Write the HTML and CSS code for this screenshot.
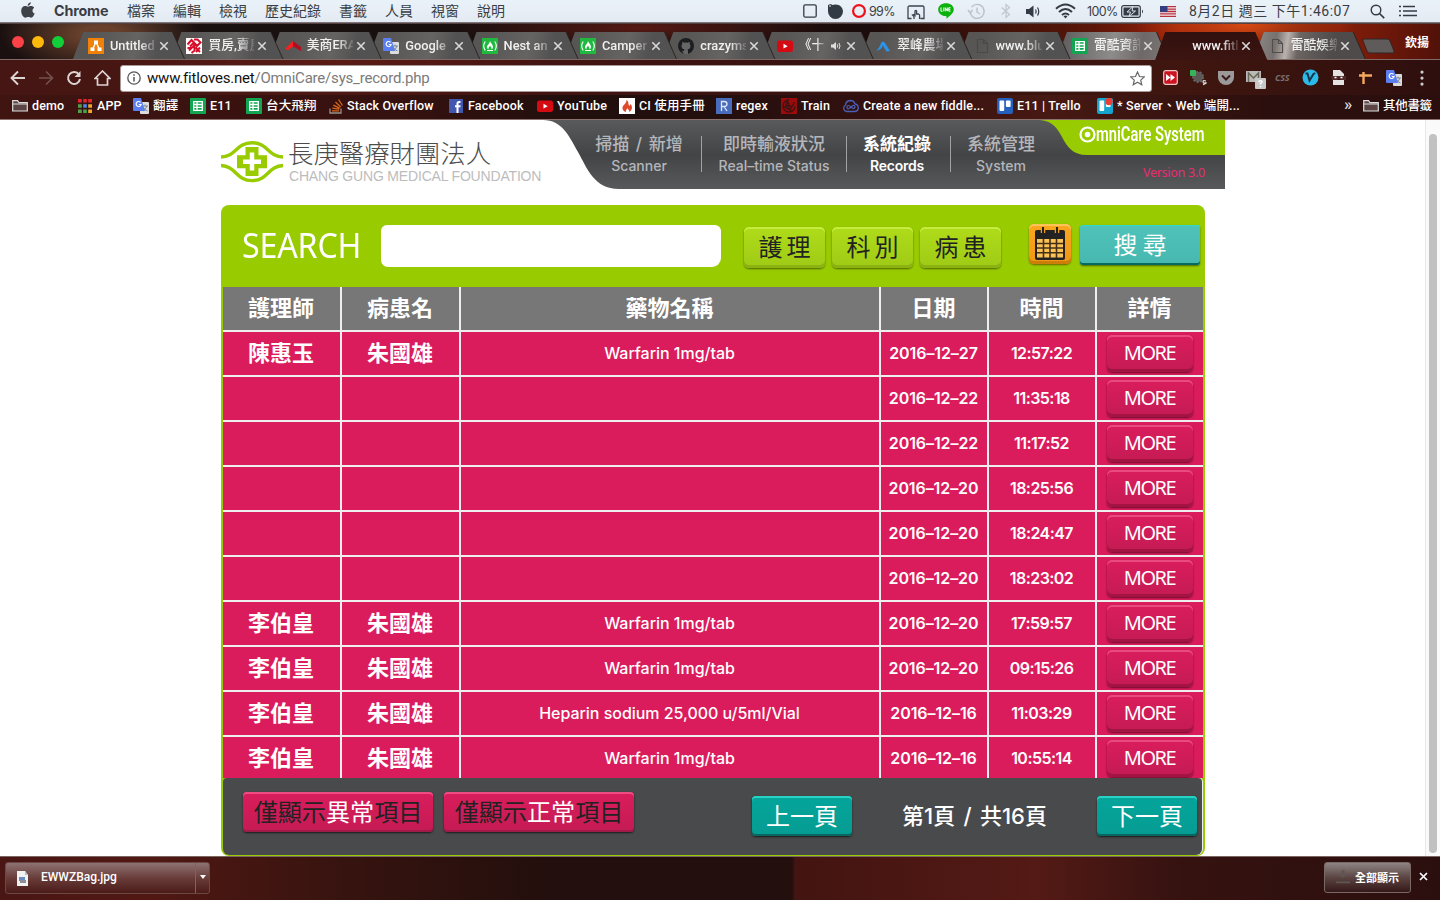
FILE: index.html
```html
<!DOCTYPE html>
<html lang="zh-Hant">
<head>
<meta charset="utf-8">
<title>OmniCare System</title>
<link rel="stylesheet" href="styles.css">
</head>
<body>
<svg class="defs" width="0" height="0">
  <symbol id="close" viewBox="0 0 10 10"><path d="M1.300 1.300l7.400 7.400M8.700 1.300L1.300 8.700" stroke="#d8d8d8" stroke-width="1.600"/></symbol>
  <symbol id="translate" viewBox="0 0 16 16"><rect x="7" y="4" width="9" height="12" rx="1" fill="#ddd"/><path d="M9 8h6M12 6.500v1.500M14 8q-1 3-4 5M10.500 9.500q1 2.500 4 3.500" stroke="#789" fill="none"/><path d="M1 0h7l4 13H1a1 1 0 0 1-1-1V1a1 1 0 0 1 1-1z" fill="#5b7ff0"/><path d="M7.500 4.300a2.500 2.500 0 1 0 .6 2.200H5.800" stroke="#fff" stroke-width="1.200" fill="none"/></symbol>
  <symbol id="sheet" viewBox="0 0 16 16"><rect width="16" height="16" rx="1" fill="#12a552"/><path d="M3.700 3.700h8.600v8.600H3.700zM3.700 6.500h8.600M3.700 9.400h8.600M7 3.700v8.600" stroke="#fff" stroke-width="1.300" fill="none"/></symbol>
  <symbol id="camp" viewBox="0 0 16 16"><rect width="16" height="16" fill="#21b83f"/><path d="M3.200 3.500q-3 4.500 0 9M12.800 3.500q3 4.500 0 9M5 12.500h6" stroke="#fff" stroke-width="1.100" fill="none"/><path d="M8 3c.5 2 3 3.500 3 6a3 3 0 0 1-1.500 2.500C10 9.500 8.500 9 8 7.500 7.500 9 6 9.500 6.500 11.500A3 3 0 0 1 5 9c0-2 2.500-3 3-6z" fill="#fff"/></symbol>
  <symbol id="youtube" viewBox="0 0 16 16"><rect y="2.500" width="16" height="11.500" rx="2.500" fill="#d50b13"/><path d="M6.500 5.800l4.200 2.400-4.200 2.400z" fill="#fff"/></symbol>
  <symbol id="doc" viewBox="0 0 16 16"><path d="M3.500 1.500h6l4 4v9h-10zM9.500 1.500v4h4" fill="none" stroke="currentColor" stroke-width="1.100"/></symbol>
  <symbol id="folder" viewBox="0 0 16 14"><path d="M.7 12V1.700h4.800l1.500 2h8.300V12z" fill="#5b4444" stroke="#ddd" stroke-width="1.200"/><path d="M.7 5h14.600" stroke="#ddd" stroke-width="1"/></symbol>
  <symbol id="trello" viewBox="0 0 16 16"><rect width="16" height="16" rx="2" fill="currentColor"/><rect x="2.500" y="2.500" width="4.700" height="10.500" rx="1" fill="#fff"/><rect x="8.900" y="2.500" width="4.700" height="6.500" rx="1" fill="#fff"/></symbol>
</svg>

<div class="menubar">
  <svg class="apple" width="14" height="17" viewBox="0 0 14 17"><path d="M9.800.2c.2 1.700-1.400 3.600-3.100 3.500C6.500 2.100 8.100.4 9.800.2zM7 4.700C7.800 4.700 8.700 4 10 4c1.300 0 2.500.7 3.200 1.700-2.500 1.500-2.100 4.900.5 5.900-.6 1.700-2 4.200-3.500 4.200-1.100 0-1.600-.7-2.900-.7s-1.800.7-2.900.7C2.200 15.800.2 12.100.2 9.100.2 5.900 2.200 4.100 4.100 4.100 5.400 4.100 6.300 4.700 7 4.700z" fill="#3f4247"/></svg>
  <b>Chrome</b><span>檔案</span><span>編輯</span><span>檢視</span><span>歷史紀錄</span><span>書籤</span><span>人員</span><span>視窗</span><span>說明</span>
  <svg width="14" height="14" viewBox="0 0 14 14"><rect x=".8" y=".8" width="12.400" height="12.400" rx="1.500" fill="none" stroke="#333b45" stroke-width="1.300"/></svg>
  <svg width="15" height="15" viewBox="0 0 15 15"><path d="M0 1l3-1 1 1c7-2 11 2 11 6.500A7.500 7.500 0 0 1 0 7.500z" fill="#333b45"/><circle cx="2" cy="2" r=".8" fill="#fff"/></svg>
  <svg width="14" height="14" viewBox="0 0 14 14"><circle cx="7" cy="7" r="5.900" fill="none" stroke="#f0101a" stroke-width="2.200"/></svg>
  <span class="pct">99%</span>
  <svg class="down2" width="18" height="15" viewBox="0 0 18 15"><path d="M4.500 13.500H1V2.500Q1 1 2.500 1h13Q17 1 17 2.500v11h-3.500M7 14v-2.500l-1.500-1.500 1.500-.5 1 1V6q.8-1 1.600 0v3h2q1 .3 1 1.500V14" fill="none" stroke="#3a4450" stroke-width="1.300"/></svg>
  <svg width="16" height="16" viewBox="0 0 16 16"><path d="M8 .3c4.500 0 7.800 2.700 7.800 6.300 0 3.200-3.300 6-7.300 9.100v-2.400C3.500 13.300.2 10.500.2 6.600.2 3 3.500.3 8 .3z" fill="#0cb10c"/><path d="M3 4.500v3.800h1.500M5.800 4.500v3.800M7.300 8.300V4.700l2 3.400V4.500M12.500 4.700h-1.700v3.500h1.700M10.800 6.400h1.500" stroke="#fff" fill="none"/></svg>
  <svg width="19" height="17" viewBox="0 0 19 17"><path d="M3.200 9a7 7 0 1 0 1.500-5M1 7l2.200 3L5.500 7M10 4.500V9l3 2" fill="none" stroke="#b9c1c9" stroke-width="1.400"/></svg>
  <svg width="10" height="16" viewBox="0 0 10 16"><path d="M.8 4.500l7.700 7L5 14.500V1.500l3.500 3-7.700 7" fill="none" stroke="#c0c7ce" stroke-width="1.200"/></svg>
  <svg width="14" height="13" viewBox="0 0 14 13"><path d="M0 4h3l4.500-3.500v12L3 9H0z" fill="#343b44"/><path d="M9.500 4.500q1.200 2 0 4M11.500 2.500q2.500 4 0 8" fill="none" stroke="#343b44" stroke-width="1.200"/></svg>
  <svg width="21" height="16" viewBox="0 0 21 16"><path d="M1 5.800q9.500-8.500 19 0M4 9q6.500-6 13 0M7 12q3.500-3 7 0" fill="none" stroke="#343b44" stroke-width="2"/><path d="M8.500 13.300q2-1.500 4 0l-2 2.200z" fill="#343b44"/></svg>
  <span class="pct">100%</span>
  <svg width="23" height="13" viewBox="0 0 23 13"><rect x=".7" y=".7" width="18.600" height="11.600" rx="2" fill="none" stroke="#343b44" stroke-width="1.200"/><rect x="2.500" y="2.500" width="15" height="8" fill="#343b44"/><path d="M12 1.500L6 7h3.500L8 11.500 14.500 6H11z" fill="#343b44" stroke="#eaf1f8" stroke-width=".9"/><path d="M21 4.500q2 2 0 4z" fill="#343b44"/></svg>
  <svg width="16" height="11" viewBox="0 0 16 11"><rect width="16" height="11" fill="#f3eaec"/><path d="M0 .7h16M0 3.100h16M0 5.500h16M0 7.900h16M0 10.300h16" stroke="#b6303e" stroke-width="1.300"/><rect width="7.500" height="6" fill="#343d80"/></svg>
  <span class="clock">8月2日 週三 下午1:46:07</span>
  <svg width="15" height="15" viewBox="0 0 15 15"><circle cx="6" cy="6" r="4.800" fill="none" stroke="#343b44" stroke-width="1.400"/><path d="M9.500 9.500l4.700 4.700" stroke="#343b44" stroke-width="1.700"/></svg>
  <svg width="18" height="12" viewBox="0 0 18 12"><path d="M4 1.500h12M4 6h14M4 10.500h14" stroke="#343b44" stroke-width="1.600"/><path d="M0 1.500h2M0 6h2M0 10.500h2" stroke="#343b44" stroke-width="1.600"/></svg>
</div>

<div class="tabstrip">
  <div class="lights"><i class="red"></i><i class="amber"></i><i class="green"></i></div>
  <div class="tabs">
    <div class="tab t1"><svg class="fav" viewBox="0 0 16 16"><rect width="16" height="16" fill="#f08209"/><path d="M8 4L4.500 11.500M8 4l3.500 7.500" stroke="#fff" stroke-width="1.400"/><path d="M6 2.500h4v3.500H6zM2.500 9.500h4V13h-4zM9.500 9.500h4V13h-4z" fill="#fff"/></svg><span>Untitled</span><svg class="x"><use href="#close"/></svg></div>
    <div class="tab t2"><svg class="fav" viewBox="0 0 16 16"><rect width="16" height="16" fill="#fff"/><g fill="none" stroke="#d80f2c" stroke-width="2"><path d="M1.500 6.500l4-4.500 2.500 2.500-4 4M8 1.500h3.500l3 3-3.500 3.500-3-3.500M1.500 10h4l3-2.500v5l-3 2.500M3 12.500l2.500-2.500M9.500 9.500l4.500 4.500M10 14l4-4.500"/></g></svg><span class="cjk">買房,賣房</span><svg class="x"><use href="#close"/></svg></div>
    <div class="tab t3"><svg class="fav" viewBox="0 0 16 16"><path d="M0 11L8 3v5.500L3 12z" fill="#ff1d1d"/><path d="M8 3l8 6v4L8 8.500z" fill="#b00f20"/></svg><span class="cjk">美商ERA</span><svg class="x"><use href="#close"/></svg></div>
    <div class="tab t4"><svg class="fav"><use href="#translate"/></svg><span>Google</span><svg class="x"><use href="#close"/></svg></div>
    <div class="tab t5"><svg class="fav"><use href="#camp"/></svg><span>Nest an</span><svg class="x"><use href="#close"/></svg></div>
    <div class="tab t6"><svg class="fav"><use href="#camp"/></svg><span>Camper</span><svg class="x"><use href="#close"/></svg></div>
    <div class="tab t7"><svg class="fav" viewBox="0 0 16 16"><circle cx="8" cy="8" r="8" fill="#1b1d20"/><path d="M6 16v-3q-2 .5-3-1.500M10 16v-3q0-1-.5-1.500 3-.5 3-3.500 0-1.200-.8-2 .3-1-.1-2-1 0-2 .8Q8 4.400 6.400 4.800 5.400 4 4.400 4q-.4 1-.1 2-.8.800-.8 2 0 3 3 3.500Q6 12 6 13v3z" fill="#666"/></svg><span>crazyms</span><svg class="x"><use href="#close"/></svg></div>
    <div class="tab t8"><svg class="fav"><use href="#youtube"/></svg><span class="cjk short">《十萬</span><svg class="snd" viewBox="0 0 10 10"><path d="M0 3.500h2L5 1v8L2 6.500H0z" fill="#ddd"/><path d="M6.300 3.300q1 1.700 0 3.400M8 2q2 3 0 6" stroke="#ddd" fill="none"/></svg><svg class="x"><use href="#close"/></svg></div>
    <div class="tab t9"><svg class="fav" viewBox="0 0 16 16"><path d="M1 13q3-2 5-8 2-3 4 0l5 8-3.500.5Q9 10 8 7.500 6 12 1 13z" fill="#2b93e8"/></svg><span class="cjk">翠峰農場</span><svg class="x"><use href="#close"/></svg></div>
    <div class="tab t10"><svg class="fav faint"><use href="#doc"/></svg><span>www.blu</span><svg class="x"><use href="#close"/></svg></div>
    <div class="tab t11"><svg class="fav"><use href="#sheet"/></svg><span class="cjk">雷酷資訊</span><svg class="x"><use href="#close"/></svg></div>
    <div class="tab t12 active"><i class="fav"></i><span>www.fitl</span><svg class="x"><use href="#close"/></svg></div>
    <div class="tab t13"><svg class="fav grey"><use href="#doc"/></svg><span class="cjk">雷酷娛樂</span><svg class="x"><use href="#close"/></svg></div>
  </div>
  <svg class="newtab" width="34" height="16" viewBox="0 0 34 16"><path d="M1 1h24q2 0 3 2l4 10q.5 2-1 2H8q-2 0-3-2L1 3z" fill="#5f5b5a" stroke="#332524"/></svg>
  <b class="profile">欽揚</b>
</div>

<div class="toolbar">
  <svg width="16" height="16" viewBox="0 0 16 16"><path d="M15 8H2M8 1.500L1.500 8 8 14.500" fill="none" stroke="#ddd4d3" stroke-width="1.900"/></svg>
  <svg width="16" height="16" viewBox="0 0 16 16"><path d="M1 8h13M8 1.500L14.500 8 8 14.500" fill="none" stroke="#735150" stroke-width="1.700"/></svg>
  <svg width="16" height="16" viewBox="0 0 16 16"><path d="M13 4.500A6 6 0 1 0 14 9" fill="none" stroke="#ddd4d3" stroke-width="2"/><path d="M14.500 1v6h-6z" fill="#ddd4d3"/></svg>
  <svg width="17" height="16" viewBox="0 0 17 16"><path d="M1 8.500L8.500 1 16 8.500h-2.500V15h-10V8.500z" fill="none" stroke="#ddd4d3" stroke-width="1.700"/></svg>
  <div class="omnibox">
    <svg width="14" height="14" viewBox="0 0 14 14"><circle cx="7" cy="7" r="6.200" fill="none" stroke="#555" stroke-width="1.300"/><path d="M7 6v4.500M7 3.300v1.500" stroke="#555" stroke-width="1.500"/></svg>
    <p class="url"><span>www.fitloves.net</span>/OmniCare/sys_record.php</p>
    <svg width="15" height="15" viewBox="0 0 15 15"><path d="M7.500 1l2 4.500 4.800.4-3.600 3.200 1.100 4.700-4.300-2.500-4.300 2.500 1.100-4.700L.7 5.900l4.800-.4z" fill="none" stroke="#666" stroke-width="1.200"/></svg>
  </div>
  <svg width="15" height="15" viewBox="0 0 15 15"><rect x=".7" y=".7" width="13.600" height="13.600" rx="2" fill="#cd1220" stroke="#efc6c8" stroke-width="1.200"/><path d="M3 4l4.500 3.500L3 11zM7.500 4L12 7.500 7.500 11z" fill="#fff"/></svg>
  <svg width="17" height="16" viewBox="0 0 17 16"><circle cx="8" cy="7" r="5" fill="#5d5756" stroke="#666" stroke-width="2" stroke-dasharray="2 1.500"/><rect width="6" height="6" rx="1" fill="#35b55b"/><path d="M16 11q-3-1-3 .7t2.500 1.200-2.500 1.800" fill="none" stroke="#ddd" stroke-width="1.200"/></svg>
  <svg width="16" height="15" viewBox="0 0 16 15"><path d="M0 1h16v6.500a8 7.500 0 0 1-16 0z" fill="#9b9999"/><path d="M4 5.500L8 9.500l4-4" stroke="#3a1b1b" stroke-width="2" fill="none"/></svg>
  <svg class="mail" width="20" height="20" viewBox="0 0 20 20"><path d="M0 2h15v11H0z" fill="#bbb9b8"/><path d="M2.500 13V4l5 5 5-5v9" stroke="#665" stroke-width="1.500" fill="none"/><rect x="9" y="9" width="11" height="11" rx="1" fill="#c7c7c7"/><path d="M12.500 13q2-2.500 3.500-.5 0 1.300-1.500 2v1M14.500 17v1.200" stroke="#fff" stroke-width="1.400" fill="none"/></svg>
  <span class="css">CSS</span>
  <svg width="17" height="17" viewBox="0 0 17 17"><circle cx="8.500" cy="8.500" r="8" fill="#2bbbea"/><path d="M3.500 4.500h2l2 7 4-6.500 1.800-1" stroke="#17354b" stroke-width="2" fill="none"/></svg>
  <svg width="15" height="15" viewBox="0 0 15 15"><path d="M2 0h7l4 4v3H2zM2 10h11v5H2z" fill="#e5e2e2"/><path d="M0 6h15v4h-5L8 8.500 6 10H1z" fill="#522929"/><path d="M3.500 7.500h2M9.500 7.500h2" stroke="#fff" stroke-width="1.500"/></svg>
  <svg width="14" height="14" viewBox="0 0 14 14"><path d="M0 4.500h13M4.500 1v12" stroke="#f4a95c" stroke-width="2.400"/></svg>
  <svg width="16" height="16"><use href="#translate"/></svg>
  <svg width="4" height="16" viewBox="0 0 4 16"><path d="M2 2v.1M2 8v.1M2 14v.1" stroke="#ccc" stroke-width="3.200" stroke-linecap="round"/></svg>
</div>

<div class="bookmarks">
  <a><svg class="fold"><use href="#folder"/></svg>demo</a>
  <a><svg class="bi apps" viewBox="0 0 14 14"><path d="M0 0h14v3.500H0z" fill="#e3262d"/><path d="M0 5.200h4v3.500H0zM0 10.400h4v3.500H0zM5 10.400h4v3.500H5z" fill="#4fa04a"/><path d="M5 5.200h4v3.500H5z" fill="#4b86ea"/><path d="M10 5.200h4v3.500h-4zM10 10.400h4v3.500h-4z" fill="#eea72b"/><path d="M4.500 0v14M9.500 0v14" stroke="#2c1110" stroke-width="1.400"/></svg>APP</a>
  <a><svg class="bi"><use href="#translate"/></svg>翻譯</a>
  <a><svg class="bi"><use href="#sheet"/></svg>E11</a>
  <a><svg class="bi"><use href="#sheet"/></svg>台大飛翔</a>
  <a class="so"><svg class="bi" viewBox="0 0 16 16"><path d="M1 10.500V15h11v-4.500" fill="none" stroke="#99908c" stroke-width="1.300"/><path d="M3 12.800h7M3.300 10.200l7 1M4.300 7.200l6.300 3M6.500 4l5.200 5M9.500 1.500l4 6" stroke="#d9661a" stroke-width="1.300"/></svg>Stack Overflow</a>
  <a class="fb"><svg class="bi" viewBox="0 0 14 14"><rect width="14" height="14" fill="#4356ad"/><path d="M8.500 14V4.500Q8.500 3 10 3h1.500M6 7.300h5.500" stroke="#fff" stroke-width="2" fill="none"/></svg>Facebook</a>
  <a><svg class="bi"><use href="#youtube"/></svg>YouTube</a>
  <a><svg class="bi" viewBox="0 0 16 16"><rect width="16" height="16" fill="#fff"/><path d="M7.500 2c3 2 1 4 3 6l1-2c2 2 2.500 6-1.500 8 1-2-1-2-1.500-4-1 2-2 2-1.500 4-4-1-4.500-5-2-7 .5-1 2.500-2 2.500-5z" fill="#e0482a"/></svg>CI 使用手冊</a>
  <a><svg class="bi" viewBox="0 0 16 16"><rect width="16" height="16" fill="#496bbb"/><path d="M5.500 13V3.500H8q3 0 3 2.500T8 8.500H5.500M8 8.500l3 4.500" fill="none" stroke="#dfe7ff" stroke-width="1.300"/></svg>regex</a>
  <a><svg class="bi" viewBox="0 0 16 16"><rect width="16" height="16" fill="#9b0b0b"/><path d="M8 2a6 6 0 1 0 6 6M8 5a3 3 0 1 0 3 3M3 4q5-2 5 4M13 4q0 5-5 4M12 13q-5 0-4-5M2.500 10q3-3 5.500-2" stroke="#3d1212" stroke-width="1.300" fill="none"/></svg>Train</a>
  <a><svg class="bi" viewBox="0 0 16 16"><path d="M4 13.500Q.7 13 .7 10q0-2 2-3 0-4 4.500-4.500Q11 2.500 12 6q3.300.5 3.300 4 0 3-3.300 3.500z" fill="none" stroke="#4960b8" stroke-width="1.300"/><path d="M8 9q-3-3-4 0 0 2.500 2 1.500l4-3q2-.5 2 1.500-1 3-4 0z" fill="none" stroke="#4960b8" stroke-width="1.200"/></svg>Create a new fiddle...</a>
  <a class="blue"><svg class="bi"><use href="#trello"/></svg><span>E11 | Trello</span></a>
  <a class="cyan"><svg class="bi" viewBox="0 0 16 16"><use href="#trello"/><circle cx="12" cy="3.500" r="3.700" fill="#ed3f35"/></svg><span>* Server、Web 端開...</span></a>
  <a class="more">»</a>
  <a><svg class="fold"><use href="#folder"/></svg>其他書籤</a>
</div>

<div class="viewport">
  <div class="site">
    <header class="header">
      <div class="brand">
        <svg width="63" height="44" viewBox="0 0 63 44"><g fill="none" stroke="#99cc00" stroke-width="3.400"><path d="M0 17C15 17 15 2.700 31 2.700S47 17 62 17"/><path d="M0 25.500C15 26 15 40.600 31 40.600S47 26 62 25.500"/></g><path d="M24.500 7h13v8.200H46v13h-8.500V36h-13v-7.800H16v-13h8.500z" fill="#99cc00"/><path d="M31 12.500v18M22 21.700h18" stroke="#fff" stroke-width="4.500"/></svg>
        <div><p class="zh">長庚醫療財團法人</p><p class="en">CHANG GUNG MEDICAL FOUNDATION</p></div>
      </div>
      <div class="navwrap">
        <svg class="navbg" width="682" height="69" viewBox="0 0 682 69"><defs><linearGradient id="ng" x1="0" y1="0" x2="0" y2="1"><stop offset="0" stop-color="#595a5c"/><stop offset=".5" stop-color="#434446"/><stop offset="1" stop-color="#58595b"/></linearGradient></defs><path d="M0 0C19 0 26 16 35 32S51 69 76 69H682V0z" fill="url(#ng)"/><path d="M497 0C524 2 515 35 544 35H682V0z" fill="#99cc00"/></svg>
        <nav class="nav">
          <a>掃描 / 新增<small>Scanner</small></a>
          <a>即時輸液狀況<small>Real–time Status</small></a>
          <a class="on">系統紀錄<small>Records</small></a>
          <a>系統管理<small>System</small></a>
        </nav>
        <div class="product">
          <div class="pname"><svg width="17" height="17" viewBox="0 0 17 17"><circle cx="8.500" cy="8.500" r="7" fill="none" stroke="#fff" stroke-width="2.200"/><circle cx="8.500" cy="8.500" r="2.800" fill="#fff"/></svg><span>mniCare System</span></div>
          <p class="ver">Version 3.0</p>
        </div>
      </div>
    </header>

    <main class="panel">
      <div class="search">
        <span class="label">SEARCH</span>
        <div class="field"></div>
        <div class="filters"><a class="btn lime">護 理</a><a class="btn lime">科 別</a><a class="btn lime">病 患</a></div>
        <a class="btn cal"><svg width="30" height="33" viewBox="0 0 30 33"><rect y="3" width="30" height="30" rx="2" fill="#222"/><path d="M2 12h26v18.500H2z" fill="#fbc254"/><path d="M8.500 12v19M15 12v19M21.500 12v19M2 16.500h26M2 21h26M2 25.800h26" stroke="#443019" stroke-width="1.600"/><path d="M8 0v6M22 0v6" stroke="#f49b18" stroke-width="4.500"/><path d="M8 0v6M22 0v6" stroke="#222" stroke-width="2"/></svg></a>
        <a class="btn aqua">搜 尋</a>
      </div>
      <div class="grid">
        <div class="th">護理師</div><div class="th">病患名</div><div class="th">藥物名稱</div><div class="th">日期</div><div class="th">時間</div><div class="th">詳情</div>
        <div class="nm">陳惠玉</div><div class="nm">朱國雄</div><div class="drug">Warfarin 1mg/tab</div><div>2016–12–27</div><div class="tm">12:57:22</div><div><a class="btn pink">MORE</a></div>
        <div></div><div></div><div></div><div>2016–12–22</div><div class="tm">11:35:18</div><div><a class="btn pink">MORE</a></div>
        <div></div><div></div><div></div><div>2016–12–22</div><div class="tm">11:17:52</div><div><a class="btn pink">MORE</a></div>
        <div></div><div></div><div></div><div>2016–12–20</div><div class="tm">18:25:56</div><div><a class="btn pink">MORE</a></div>
        <div></div><div></div><div></div><div>2016–12–20</div><div class="tm">18:24:47</div><div><a class="btn pink">MORE</a></div>
        <div></div><div></div><div></div><div>2016–12–20</div><div class="tm">18:23:02</div><div><a class="btn pink">MORE</a></div>
        <div class="nm">李伯皇</div><div class="nm">朱國雄</div><div class="drug">Warfarin 1mg/tab</div><div>2016–12–20</div><div class="tm">17:59:57</div><div><a class="btn pink">MORE</a></div>
        <div class="nm">李伯皇</div><div class="nm">朱國雄</div><div class="drug">Warfarin 1mg/tab</div><div>2016–12–20</div><div class="tm">09:15:26</div><div><a class="btn pink">MORE</a></div>
        <div class="nm">李伯皇</div><div class="nm">朱國雄</div><div class="drug">Heparin sodium 25,000 u/5ml/Vial</div><div>2016–12–16</div><div class="tm">11:03:29</div><div><a class="btn pink">MORE</a></div>
        <div class="nm">李伯皇</div><div class="nm">朱國雄</div><div class="drug">Warfarin 1mg/tab</div><div>2016–12–16</div><div class="tm">10:55:14</div><div><a class="btn pink">MORE</a></div>
      </div>
      <footer class="pager">
        <a class="btn only">僅顯示<em>異常</em>項目</a>
        <a class="btn only">僅顯示<em>正常</em>項目</a>
        <a class="btn teal prev">上一頁</a>
        <span class="count">第1頁 / 共16頁</span>
        <a class="btn teal">下一頁</a>
      </footer>
    </main>
  </div>
  <div class="scroll"><i></i></div>
</div>

<div class="shelf">
  <div class="file"><svg width="12" height="15" viewBox="0 0 12 15"><path d="M0 0h8l3 4v11H0z" fill="#f2f2f2"/><path d="M8 0v4h3z" fill="#bbb"/><rect x="2" y="6" width="6" height="4" fill="#6c8cc0"/><rect x="3" y="9" width="6" height="3" fill="#8a8f98"/></svg><span>EWWZBag.jpg</span><i></i></div>
  <div class="all"><svg width="14" height="14" viewBox="0 0 14 14"><path d="M5.500 0h3v4H11L7 8 3 4h2.500zM0 11.500h14v1.800H0z" fill="#5f5654"/></svg><span>全部顯示</span></div>
  <svg class="dismiss" width="9" height="9" viewBox="0 0 9 9"><path d="M1 1l7 7M8 1L1 8" stroke="#fff" stroke-width="1.700"/></svg>
</div>
</body>
</html>
```
FILE: styles.css
```css
* { box-sizing: border-box; }
html, body { margin: 0; height: 100%; }
body {
  width: 1440px; height: 900px; overflow: hidden;
  display: flex; flex-direction: column;
  font-family: Roboto, "Noto Sans CJK TC", sans-serif;
  background: #2a100e;
}
p { margin: 0; }
.defs { position: absolute; }
svg { display: block; flex: none; }

/* macOS menu bar */
.menubar {
  height: 24px; flex: none; padding: 0 0 2px 21px;
  display: grid; align-items: center;
  grid-template-columns: 33px 73px 46px 46px 46px 74px 46px 46px 46px 326px 25px 24px 17px 38px 31px 29px 34px 25px 29px 32px 34px 39px 29px 181px 29px 41px;
  background: linear-gradient(#eaf2f9, #e4eaf2 22px, #667688 22px, #8d7571 23px, #1d0d0c 24px);
  color: #3a3e44; font-size: 14px; line-height: 20px; white-space: nowrap;
}
.menubar b { font: 700 14.300px/20px Inter, sans-serif; letter-spacing: -.15px; }
.pct { font: 12.500px/20px Inter, sans-serif; letter-spacing: -.65px; margin-top: 1px; }
.clock { letter-spacing: .5px; }
.down2 { margin-top: 3px; }
.apple { margin-top: -1px; }

/* tab strip */
.tabstrip {
  height: 36px; flex: none; display: flex; align-items: flex-start; position: relative;
  background:
    radial-gradient(ellipse 110px 34px at 1245px 0, #d84a13, transparent),
    radial-gradient(ellipse 100px 40px at 100px 10px, #68402c 20%, transparent),
    radial-gradient(ellipse 190px 20px at 640px 4px, #561914, transparent),
    linear-gradient(90deg, #1a1010, #18100f 30%, #1a0c0b 60%, #5b1609 76%, #99200a 82%, #571008 89%, #851e0a 93%, #511109);
  border-bottom: 1px solid #7f6a67;
}
.lights { width: 73px; padding: 12px 0 0 12px; display: flex; gap: 8px; flex: none; }
.lights i { width: 12px; height: 12px; border-radius: 50%; }
.red { background: #fc4147; } .amber { background: #fdb90b; } .green { background: #11cf39; }
.tabs { display: grid; grid-template-columns: repeat(13, 98.400px); height: 27px; margin-top: 8px; flex: none; }
.tab {
  position: relative; display: flex; align-items: center; padding-left: 15px;
  color: #f0f0f0; font-size: 12.800px; font-weight: 500; line-height: 20px; white-space: nowrap; isolation: isolate;
}
.tab::before, .tab::after {
  content: ""; position: absolute; z-index: -1; left: 0; top: 0; width: 112px; height: 27px;
  clip-path: polygon(0 100%, 10px 0, 99px 0, 111px 100%);
  background: linear-gradient(105deg, #575655 20%, #666463 55%, #535252 75%);
}
.tab::after { z-index: -2; width: 114px; clip-path: polygon(0 100%, 10px 0, 100px 0, 112px 100%); background: #2b2423; }
.t1 { z-index: 13; } .t2 { z-index: 12; } .t3 { z-index: 11; } .t4 { z-index: 10; } .t5 { z-index: 9; }
.t6 { z-index: 8; } .t7 { z-index: 7; } .t8 { z-index: 6; } .t9 { z-index: 5; } .t10 { z-index: 4; }
.t11 { z-index: 3; } .t12 { z-index: 14; } .t13 { z-index: 2; }
.t13::before { background: linear-gradient(100deg, #8f8b8a, #77706e 20%, #b9b1ac 30%, #6b6462 40%, #4e4b4a 70%); }
.t11::before { background: linear-gradient(100deg, #5a5959, #8e8c8b 50%, #6e6968 75%, #7b7775); }
.active::before, .active::after { height: 28px; background: linear-gradient(#31100d, #3c1512); }
.fav { width: 16px; height: 16px; flex: none; }
.tab span {
  margin: 0 0 0 6px; width: 46px; overflow: hidden; flex: none;
  -webkit-mask-image: linear-gradient(90deg, #000 65%, rgba(0,0,0,.15));
  mask-image: linear-gradient(90deg, #000 65%, rgba(0,0,0,.15));
}
.tab .cjk { margin-top: -1px; }
.tab .short { width: 26px; }
.snd { width: 10px; height: 10px; margin: 0 0 0 6px; }
.tab .short + .snd + .x { margin-left: 5px; }
.x { width: 10px; height: 10px; margin-left: 3px; }
.faint { color: #4a4848; } .grey { color: #504e4d; }
.newtab { margin: 14px 0 0 10px; }
.profile { margin: 9px 0 0 9px; font-size: 12px; line-height: 20px; color: #fff; white-space: nowrap; }

/* toolbar */
.toolbar {
  height: 35px; flex: none; padding-left: 10px;
  display: grid; align-items: center; justify-items: start;
  grid-template-columns: 28px 28px 28px 26px 1043px 27px 28px 28px 29px 27px 29px 28px 27px 34px 20px;
  background:
    radial-gradient(ellipse 220px 40px at 330px 0, #5b1b15, transparent),
    linear-gradient(90deg, #451613, #4a1612 25%, #351110 60%, #40160f 82%, #2e0f0e);
}
.omnibox {
  width: 1032px; height: 27px; border-radius: 3px; background: #fff; margin-top: 1px;
  display: flex; align-items: center; padding: 0 6px; border: 1px solid #a79a98;
}
.mail { margin-top: 3px; }
.url { flex: 1; margin-left: 6px; font-size: 15px; line-height: 24px; color: #7b7b7b; letter-spacing: -.2px; }
.url span { color: #111; }
.css { font: italic 700 9px/14px "Noto Sans", sans-serif; color: #77706f; letter-spacing: -.3px; }

/* bookmarks bar */
.bookmarks {
  height: 25px; flex: none; padding: 0 0 3px 12px; border-bottom: 1px solid #8c7370;
  display: grid; align-items: center;
  grid-template-columns: 66px 55px 57px 56px 83px 120px 88px 82px 97px 65px 62px 154px 100px 247px 19px 77px;
  background: linear-gradient(90deg, #3f1411, #35110f 28%, #200f0d 40%, #230f0e 50%, #361110 62%, #471913 73%, #2b0f0e 88%, #2a0f0e);
  color: #fff; font-size: 12.500px; font-weight: 500; line-height: 20px; letter-spacing: .15px; white-space: nowrap;
}
.bookmarks a { display: flex; align-items: center; gap: 4px; }
.bi { width: 16px; height: 16px; } .fold { width: 16px; height: 14px; }
.apps { width: 14px; height: 14px; margin-right: 1px; }
.bookmarks .so { gap: 2px; }
.fb .bi { width: 14px; height: 14px; margin-right: 1px; }
.blue .bi { color: #2560bd; } .cyan .bi { color: #15a5ce; }
.bookmarks .more { font-size: 17px; color: #ddd; margin-top: -3px; }
.bookmarks a:last-child { letter-spacing: -.3px; }

/* page viewport */
.viewport { height: 736px; flex: none; background: #fff; display: flex; justify-content: space-between; overflow: hidden; }
.site { margin-left: 221px; width: 1004px; }
.scroll { width: 15px; background: #fafafa; border-left: 1px solid #e8e8e8; padding: 14px 0 0 3px; }
.scroll i { display: block; width: 8px; height: 719px; border-radius: 4px; background: #c1c1c1; }

.header { height: 85px; display: flex; }
.brand { width: 322px; padding-top: 20px; display: flex; gap: 4px; flex: none; white-space: nowrap; }
.zh { margin: -3px 0 1px; font: 300 25.400px/30px "Noto Sans CJK TC", sans-serif; color: #4c4c4c; }
.en { margin-left: 1px; font: 14px/16px "Liberation Sans", sans-serif; letter-spacing: -.18px; color: #bcbcbc; }
.navwrap { position: relative; width: 682px; height: 69px; display: flex; padding-left: 34px; }
.navbg { position: absolute; left: 0; top: 0; }
.nav { position: relative; display: grid; grid-template-columns: 125px 145px 104px 101px; padding-top: 11px; }
.nav a {
  display: flex; flex-direction: column; align-items: center; white-space: nowrap;
  color: #b5b6ba; font: 500 17px/26px Inter, "Noto Sans CJK TC", sans-serif;
  height: 42px; position: relative; padding-right: 1px;
}
.nav a:first-child { word-spacing: 2px; }
.nav a:not(:last-child)::after { content: ""; position: absolute; right: 0; top: 5px; height: 36px; width: 1px; background: #a1a2a4; }
.nav small { font-size: 14px; line-height: 18px; letter-spacing: 0; word-spacing: 0; }
.nav .on { color: #fff; font-weight: 700; padding-right: 4px; }
.nav .on small { font-weight: 600; letter-spacing: -.2px; }
.product { position: relative; flex: 1; padding-right: 20px; display: flex; flex-direction: column; align-items: flex-end; }
.pname { display: flex; align-items: center; height: 28px; width: 126px; color: #fff; white-space: nowrap; }
.pname span { display: block; transform: scaleX(.7); transform-origin: left center; width: 109px; font: 600 21px/28px Roboto, sans-serif; }
.ver { margin-top: 15px; font: 12.500px/20px "Noto Sans", sans-serif; letter-spacing: -.25px; color: #ec2a70; }

.panel { width: 984px; height: 651px; background: #9c0; border-radius: 8px; padding: 0 2px 1px; overflow: hidden; }
.search { height: 82px; display: flex; padding-left: 19px; }
.label { width: 139px; padding-top: 16px; }
.label { font: 35px/48px "Noto Sans", sans-serif; color: #fff; transform: scaleX(.92); transform-origin: left center; letter-spacing: -.2px; }
.field { width: 340px; height: 42px; margin-top: 20px; border-radius: 6px 6px 9px 7px; background: #fff; }
.filters { display: flex; gap: 7px; margin: 22px 0 0 23px; }
.btn { display: flex; align-items: center; justify-content: center; border-radius: 5px; white-space: nowrap; }
.lime {
  width: 81px; height: 41px; padding: 0 0 4px 0; font-size: 24px; word-spacing: -2px; color: #222;
  background: linear-gradient(#afdc19, #9fca16); box-shadow: inset 0 2px #c6ec3d, inset 0 -3px #8cb312, 0 1px 2px #4d6600;
}
.cal { width: 42px; height: 40px; margin: 19px 0 0 27.500px; padding-bottom: 1px; background: linear-gradient(#fba71f, #ef9714); box-shadow: inset 0 2px #ffc459, inset 0 -3px #cd7d0a, 0 1px 2px #6a6200; }
.aqua { width: 120px; height: 40px; margin: 20px 0 0 9.500px; padding-bottom: 3px; border-radius: 3px; font-size: 24px; word-spacing: -1px; color: #fff; background: linear-gradient(#4fc2b9, #47b8b0); box-shadow: inset 0 1px #31dbc8, inset 0 -2px #076a61, 0 1px 2px #4d6600; }

/* records */
.grid {
  height: 491px; overflow: hidden; background: #eee;
  display: grid; gap: 2px; grid-template-columns: 117px 117px 418px 106px 106px 106px; grid-auto-rows: 43px;
}
.grid > div {
  display: flex; align-items: center; justify-content: center; padding: 0 1px 2px 0;
  background: #db1c5c; color: #fff; font: 600 16px/22px Inter, sans-serif; letter-spacing: -.08px; white-space: nowrap;
}
.grid > div:nth-child(6n) { padding-bottom: 0; }
.grid .th, .grid .nm { font: 700 22px/30px "Noto Sans CJK TC", sans-serif; letter-spacing: 0; }
.grid > .th, .grid > .th:nth-child(6n), .grid > .nm { padding: 0 1px 5px 0; }
.grid .th { background: #777; }
.grid .drug { font-weight: 500; letter-spacing: -.03px; }
.grid .tm { letter-spacing: -.55px; }
.pink {
  width: 86px; height: 37px; padding-bottom: 2px; font: 20px/30px "Noto Sans", sans-serif; letter-spacing: -1.500px;
  background: linear-gradient(#da1d5c, #c41b54); box-shadow: inset 0 2px #e94a80, inset 0 -3px #a31443, 0 1px 2px #6b0c2d;
}
.pager {
  height: 77px; width: 979px; background: #494a4c; border-radius: 4px 4px 6px 6px; padding: 14px 5px 0 20px;
  display: flex; gap: 11px; box-shadow: 1px 0 #eee;
}
.only {
  width: 190px; height: 40px; padding-bottom: 3px; font-size: 24.100px; color: #222; border-radius: 4px;
  background: linear-gradient(#da1d5c, #c41b54); box-shadow: inset 0 2px #ee4c83, inset 0 -2px #9f1a47, 0 1px 2px #1b1b1b;
}
.only em { font-style: normal; color: #fff; }
.teal {
  width: 100px; height: 40px; margin-top: 4px; padding-bottom: 4px; font-size: 24px; color: #fff; border-radius: 4px;
  background: linear-gradient(#04a59b, #069c93); box-shadow: inset 0 2px #29d3c4, inset 0 -2px #07665f, 0 1px 2px #1b1b1b;
}
.prev { margin-left: 107px; }
.count { width: 223px; padding-top: 4px; text-align: center; font: 500 22px/40px Inter, "Noto Sans CJK TC", sans-serif; word-spacing: 2.500px; color: #fff; white-space: nowrap; }

/* download shelf */
.shelf {
  height: 44px; border-top: 1px solid #7c6663; display: flex; padding: 5px 12px 0 5px; align-items: flex-start;
  background: linear-gradient(90deg, #491613, #511813 10%, #35130f 25%, #230f0d 38%, #230f0d 55%, #431411 55.200%, #541a15 72%, #351210 82%, #2b0f0e);
}
.file {
  width: 205px; height: 32px; border-radius: 3px; border: 1px solid #6d4744; display: flex; align-items: center; padding-left: 11px;
  background: linear-gradient(#8d7271, #693d3a 50%, #4b1b18); color: #fff; font-size: 12px; font-weight: 500;
}
.file span { flex: 1; margin-left: 12px; margin-top: -2px; }
.file i { width: 14px; height: 100%; border-left: 1px solid #895f5c; display: grid; place-items: center; }
.file i::before { content: ""; border: 3px solid transparent; border-top: 4px solid #fff; margin-top: 1px; }
.all {
  margin-left: auto; width: 87px; height: 31px; border-radius: 3px; border: 1px solid #786866; display: flex; align-items: center; gap: 5px; padding: 0 0 2px 11px;
  background: linear-gradient(#8e8482, #5b4543 50%, #341817); color: #fff; font-size: 11px; font-weight: 700; white-space: nowrap;
}
.dismiss { margin: 10px 0 0 8px; }
```
